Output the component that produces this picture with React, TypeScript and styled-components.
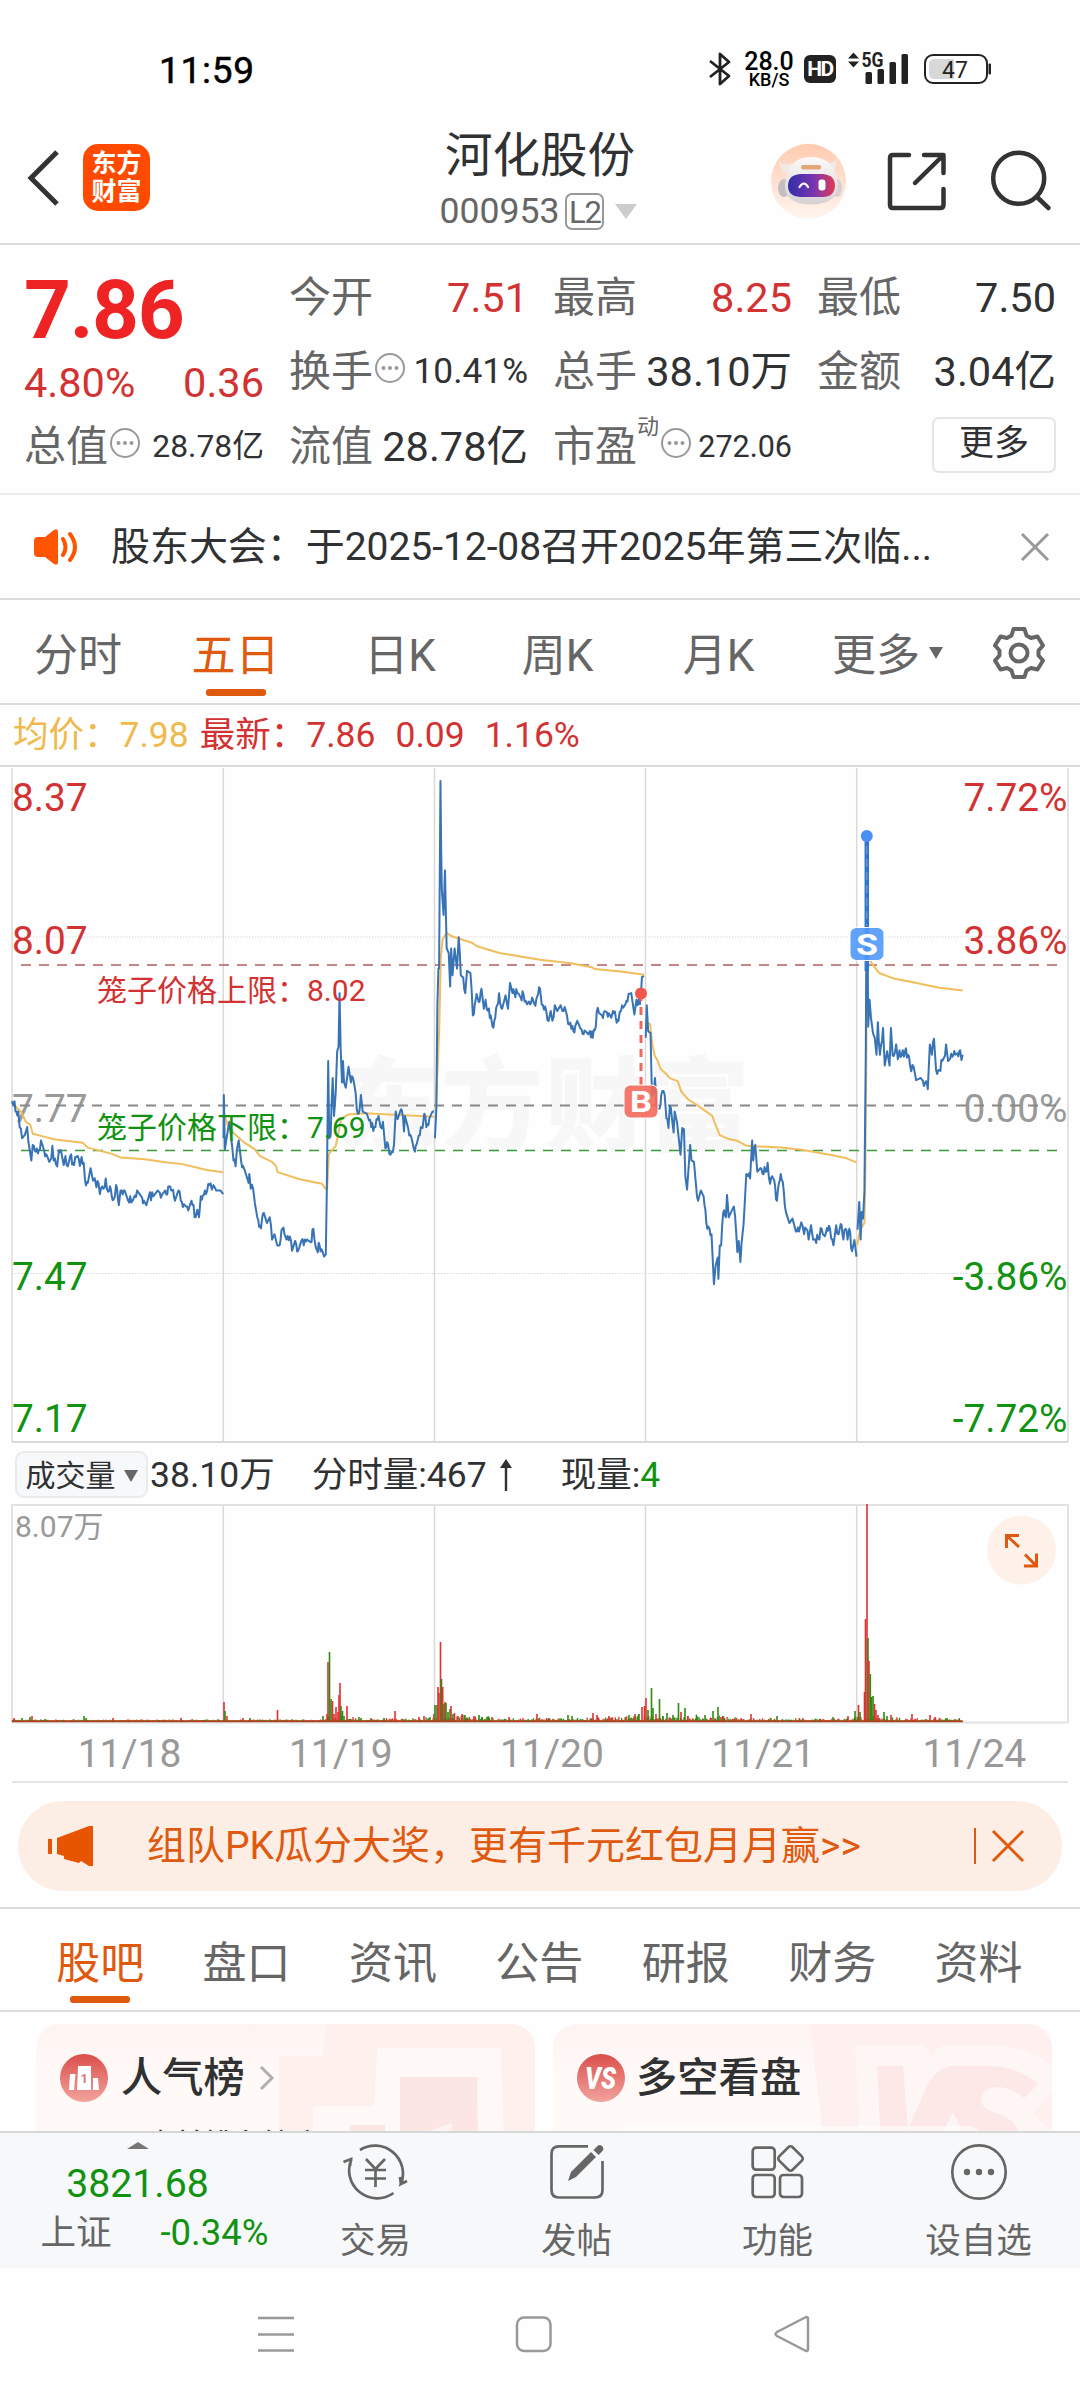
import React from "react";
import styled, { createGlobalStyle } from "styled-components";

const RED = "#d23232";
const GREEN = "#119211";
const ORANGE = "#df590f";
const INK = "#303133";
const GREY = "#666";

const Global = createGlobalStyle`
  * { box-sizing: border-box; }
  body { margin: 0; background: #fefefe; }
  body, text { font-family: Roboto, "Noto Sans CJK SC", sans-serif; }
`;

const Screen = styled.div`
  width: 1080px;
  height: 2400px;
  overflow: hidden;
  display: flex;
  flex-direction: column;
  background: #fefefe;
  color: ${INK};
  line-height: 1;
  white-space: nowrap;
`;

/* ---------- status bar ---------- */
const StatusBar = styled.div`
  height: 120px;
  flex: none;
  display: flex;
  align-items: center;
  padding: 17px 88px 0 159px;
  color: #000;
`;
const Clock = styled.div`
  font-size: 37px;
  font-weight: 400;
  letter-spacing: 0.7px;
  margin: 3px auto 0 0;
  -webkit-text-stroke: 0.5px #000;
`;
const Speed = styled.div`
  width: 54px;
  margin: 1px 8px 0 10px;
  text-align: center;
  font-size: 25px;
  font-weight: 500;
  line-height: 21px;
  small { display: block; font-size: 18px; line-height: 15px; }
`;
const HdBadge = styled.div`
  width: 32px;
  height: 28px;
  border-radius: 6px;
  background: #222;
  color: #fff;
  font-size: 21px;
  font-weight: 700;
  line-height: 29px;
  text-align: center;
  letter-spacing: -1.5px;
`;

/* ---------- title bar ---------- */
const TitleBar = styled.header`
  height: 125px;
  flex: none;
  display: grid;
  grid-template-columns: 330px 1fr 330px;
  border-bottom: 2px solid #dcdcdc;
`;
const TitleSide = styled.div`
  display: flex;
  align-items: center;
  padding: 0 0 8px 24px;
`;
const Logo = styled.div`
  width: 67px;
  height: 67px;
  margin-left: 21px;
  border-radius: 15px;
  background: #ff4a00;
  color: #fff;
  display: grid;
  place-content: center;
  text-align: center;
  font-size: 25px;
  font-weight: 700;
  line-height: 28px;
`;
const TitleText = styled.div`
  display: flex;
  flex-direction: column;
  align-items: center;
  h1 { margin: 11px 0 0; font-size: 47.5px; font-weight: 400; line-height: 50px; }
`;
const CodeRow = styled.div`
  display: flex;
  align-items: center;
  gap: 6px;
  margin: 12px 3px 0 0;
  color: ${GREY};
  font-size: 35.6px;
  i { margin-left: 5px; }
`;
const LevelTag = styled.span`
  width: 39px;
  height: 37px;
  border: 2px solid #999;
  border-radius: 7px;
  font-size: 31px;
  line-height: 35px;
  letter-spacing: -1px;
  text-align: center;
`;
const Triangle = styled.i<{ w: number; h: number; color: string; up?: boolean }>`
  border: ${(p) => p.w / 2}px solid transparent;
  border-top: ${(p) => (p.up ? "0" : `${p.h}px solid ${p.color}`)};
  border-bottom: ${(p) => (p.up ? `${p.h}px solid ${p.color}` : "0")};
`;

/* ---------- quote ---------- */
const Quote = styled.section`
  height: 250px;
  flex: none;
  display: grid;
  grid-template-columns: 240px 239px 239px 239px;
  grid-template-rows: 74px 74px 76px;
  column-gap: 25px;
  padding: 16px 0 0 24px;
  border-bottom: 2px solid #ececec;
`;
const PriceBlock = styled.div`
  grid-row: 1 / 3;
  color: ${RED};
  strong { display: block; margin-top: 8px; font-size: 82px; font-weight: 700; color: #ee2323; letter-spacing: -1.4px; }
  div { display: flex; justify-content: space-between; margin-top: 11px; font-size: 41.5px; }
`;
const Cell = styled.div`
  display: flex;
  align-items: center;
`;
const Label = styled.span`
  color: ${GREY};
  font-size: 42px;
`;
const Value = styled.span<{ size?: number; color?: string }>`
  margin-left: auto;
  font-size: ${(p) => p.size ?? 41.5}px;
  color: ${(p) => p.color ?? INK};
`;
const Sup = styled.sup`
  align-self: flex-start;
  margin-top: 7px;
  font-size: 22px;
  line-height: 1;
  color: ${GREY};
`;
const MoreButton = styled.button`
  margin: -4px 0 0 auto;
  width: 124px;
  height: 56px;
  border: 2px solid #e3e5e7;
  border-radius: 7px;
  background: none;
  padding: 0 0 3px;
  font: 35px/1 Roboto, "Noto Sans CJK SC", sans-serif;
  color: ${INK};
`;

/* ---------- notice ---------- */
const Notice = styled.section`
  height: 105px;
  flex: none;
  display: flex;
  align-items: center;
  padding: 0 30px 0 33px;
  border-bottom: 2px solid #dcdcdc;
  p { margin: 1px auto 0 32px; font-size: 39px; letter-spacing: -0.05px; }
`;

/* ---------- tabs ---------- */
const PeriodTabs = styled.nav`
  height: 105px;
  flex: none;
  display: grid;
  grid-template-columns: 156px 159px 170px 145px 177px 161px 101px;
  border-bottom: 2px solid #dcdcdc;
`;
const SectionTabs = styled.nav`
  height: 105px;
  flex: none;
  display: grid;
  grid-template-columns: repeat(7, 146.4px);
  padding-left: 27px;
  border-top: 2px solid #dcdcdc;
  border-bottom: 2px solid #dcdcdc;
`;
const Tab = styled.div<{ active?: boolean }>`
  display: grid;
  grid-auto-flow: column;
  place-content: center;
  align-items: center;
  gap: 9px;
  padding-top: 8px;
  position: relative;
  font-size: 44px;
  color: ${(p) => (p.active ? ORANGE : GREY)};
  svg, i { margin-top: -6px; }
  &::after {
    content: "";
    display: ${(p) => (p.active ? "block" : "none")};
    position: absolute;
    left: calc(50% - 30px);
    bottom: 7px;
    width: 60px;
    height: 7px;
    border-radius: 3px;
    background: ${ORANGE};
  }
`;

/* ---------- chart ---------- */
const AverageRow = styled.div`
  height: 62px;
  flex: none;
  display: flex;
  align-items: center;
  padding: 2px 0 0 13px;
  border-bottom: 2px solid #dcdcdc;
  font-size: 35.5px;
  color: ${RED};
  span { margin-right: 20px; }
  span:first-child { color: #f0b94b; margin-right: 11px; }
`;
const PriceChart = styled.svg`
  flex: none;
  display: block;
`;
const VolumeRow = styled.div`
  height: 61px;
  flex: none;
  display: flex;
  align-items: center;
  padding: 2px 0 0 15px;
  font-size: 35.5px;
  b { font-weight: 400; color: ${GREEN}; }
`;
const IndicatorPill = styled.div`
  width: 133px;
  height: 47px;
  margin-right: 2px;
  padding-top: 2px;
  display: flex;
  align-items: center;
  justify-content: center;
  gap: 8px;
  border: 2px solid #e9eaec;
  border-radius: 9px;
  background: #f7f8fa;
  font-size: 30px;
`;
const VolumeFigure = styled.span<{ gap: number }>`
  margin: 2px ${(p) => p.gap}px 0 0;
`;
const Dates = styled.div`
  height: 59px;
  flex: none;
  display: grid;
  grid-template-columns: repeat(5, 211.2px);
  margin: 0 12px;
  padding-left: 12px;
  border-bottom: 2px solid #e4e4e4;
  text-align: center;
  font-size: 39px;
  line-height: 61px;
  color: #999;
`;

/* ---------- promo banner ---------- */
const Banner = styled.section`
  height: 90px;
  flex: none;
  margin: 18px 18px 16px;
  border-radius: 45px;
  background: #fceee5;
  display: flex;
  align-items: center;
  padding: 0 37px 0 29px;
  color: ${ORANGE};
  p { margin: 0 auto 0 52px; font-size: 39px; }
`;
const Divider = styled.i`
  width: 2px;
  height: 36px;
  margin-right: 15px;
  background: ${ORANGE};
`;

/* ---------- cards ---------- */
const Cards = styled.section`
  flex: 1;
  overflow: hidden;
  display: grid;
  grid-template-columns: 499px 499px;
  gap: 18px;
  padding: 12px 0 0 36px;
`;
const Card = styled.article`
  position: relative;
  height: 180px;
  padding: 30px 24px 0;
  border-radius: 24px;
  overflow: hidden;
  background: linear-gradient(#fef4f2, #fffaf8 60px);
`;
const CardArt = styled.svg`
  position: absolute;
  left: 0;
  top: 0;
`;
const CardHead = styled.div`
  position: relative;
  display: flex;
  align-items: center;
  font-size: 41.3px;
  font-weight: 500;
`;
const CardTitle = styled.span<{ inset: number }>`
  margin: 1px 14px 0 ${(p) => p.inset}px;
`;
const CardNote = styled.div`
  position: relative;
  margin: 28.500px 0 0 86px;
  font-size: 29px;
  color: ${INK};
`;

/* ---------- bottom bar ---------- */
const BottomBar = styled.footer`
  height: 137px;
  flex: none;
  display: grid;
  grid-template-columns: 275px repeat(4, 201px);
  background: #f6f8fa;
  border-top: 2px solid #d5d7d9;
`;
const IndexBox = styled.div`
  display: flex;
  flex-direction: column;
  align-items: center;
  padding-top: 9px;
  color: ${GREEN};
  font-size: 39.2px;
`;
const IndexValue = styled.div`
  margin-top: 16px;
`;
const IndexChange = styled.div`
  display: flex;
  align-items: center;
  gap: 49px;
  margin: 11px 0 0 34px;
  font-size: 36.5px;
  span { font-size: 35.5px; color: ${GREY}; }
`;
const Action = styled.div`
  display: flex;
  flex-direction: column;
  align-items: center;
  padding-top: 9px;
  font-size: 35.5px;
  color: ${GREY};
  svg { margin-bottom: 22px; }
`;
const SystemNav = styled.div`
  height: 132px;
  flex: none;
  display: flex;
  align-items: flex-start;
  gap: 218px;
  padding: 46px 0 0 256px;
`;

/* ---------- icons ---------- */
const InfoSvg = styled.svg`
  margin: -8px 0 0 1px;
`;
const InfoDots = () => (
  <InfoSvg width="32" height="32" viewBox="0 0 32 32" fill="none">
    <circle cx="16" cy="16" r="14" stroke="#999" strokeWidth="2" />
    {[9.5, 16, 22.5].map((x) => <circle key={x} cx={x} cy="16" r="2" fill="#999" />)}
  </InfoSvg>
);

const Cross = ({ size, color, width }: { size: number; color: string; width: number }) => (
  <svg width={size} height={size} viewBox={`0 0 ${size} ${size}`}>
    <path d={`M2 2L${size - 2} ${size - 2}M${size - 2} 2L2 ${size - 2}`} stroke={color} strokeWidth={width} fill="none" />
  </svg>
);

const StatusIcons = () => (
  <svg width="146" height="36" viewBox="846 51 146 36" fill="#222">
    <path d="M853.500 52.500L859 58.500H848ZM853.500 67.500L859 61.500H848Z" />
    <text x="861.500" y="67" fontSize="20" fontWeight="700" textLength="22" lengthAdjust="spacingAndGlyphs">5G</text>
    <rect x="865.500" y="72" width="6.500" height="12" rx="1.500" />
    <rect x="877.500" y="69" width="6.500" height="15" rx="1.500" />
    <rect x="889.500" y="62" width="6.500" height="22" rx="1.500" />
    <rect x="901.500" y="54" width="6.500" height="30" rx="1.500" />
    <rect x="925" y="55" width="62" height="28" rx="8" fill="#fff" stroke="#222" strokeWidth="2" />
    <path d="M935 59H954V79H935Q929 79 929 74V64Q929 59 935 59Z" fill="#d8d8d8" />
    <rect x="988.500" y="63.500" width="2.500" height="11" rx="1" />
    <text x="942" y="77.500" fontSize="23">47</text>
  </svg>
);

const HeaderSvg = styled.svg`
  margin: 8px 0 0 -14px;
`;
const HeaderActions = () => (
  <HeaderSvg width="300" height="90" viewBox="760 133 300 90" fill="none" stroke="#333" strokeWidth="4.500" strokeLinecap="round" strokeLinejoin="round">
    <defs>
      <linearGradient id="halo" x1="0" y1="0" x2="0" y2="1"><stop offset="0" stopColor="#ffcbb0" /><stop offset="1" stopColor="#fff5ef" /></linearGradient>
      <linearGradient id="visor"><stop offset="0" stopColor="#332fa8" /><stop offset=".55" stopColor="#7a35b0" /><stop offset="1" stopColor="#e23a55" /></linearGradient>
      <linearGradient id="helmet" x1="0" y1="0" x2="0" y2="1"><stop offset="0" stopColor="#fcfaf9" /><stop offset="1" stopColor="#d5d1d3" /></linearGradient>
    </defs>
    <g stroke="none">
      <circle cx="808.500" cy="177.300" r="37.500" fill="url(#halo)" />
      <path d="M779 157Q779 168 788 170L793 159Q784 163 779 157ZM836 155Q838 167 829 170L824 158Q833 161 836 155Z" fill="#f2e9e7" />
      <ellipse cx="784" cy="184" rx="6" ry="9" fill="#c5bdc2" />
      <ellipse cx="837" cy="184" rx="5" ry="9" fill="#d9cfd2" />
      <path d="M785 182Q787 153 811 153Q835 153 838 181Q838 200 811 200.500Q785 200 785 182Z" fill="url(#helmet)" />
      <rect x="801" y="161" width="20" height="4.500" rx="2" fill="#e2a677" />
      <path d="M800 170H823Q835 171 835 182Q834 193 823 193H800Q788 192 788 182Q788 171 800 170Z" fill="url(#visor)" />
      <rect x="818.500" y="175.500" width="7" height="11" rx="3" fill="#fff" />
    </g>
    <path d="M799.500 183Q804 176 808 183" stroke="#fff" strokeWidth="2.200" />
    <path d="M909 151H893Q890 151 890 154V201Q890 204 893 204H940Q943.500 204 943.500 201V185M924 151H943.500V169M942.500 152L915 179" />
    <circle cx="1018.700" cy="174.300" r="25.500" />
    <path d="M1037 193L1048.500 204" />
  </HeaderSvg>
);

const Gear = () => (
  <svg width="54" height="54" viewBox="-27 -27 54 54" fill="none" stroke="#666" strokeWidth="4" strokeLinejoin="round">
    <path d="M-5.500 -24H5.500L7.500 -17.500L12 -15L18.500 -16.500L24 -7.500L19.500 -2.500V2.500L24 7.500L18.500 16.500L12 15L7.500 17.500L5.500 24H-5.500L-7.500 17.500L-12 15L-18.500 16.500L-24 7.500L-19.500 2.500V-2.500L-24 -7.500L-18.500 -16.500L-12 -15L-7.500 -17.500Z" />
    <circle r="8.500" />
  </svg>
);

/* ---------- chart data ---------- */
/* Session price tracks in plot units: x advances about 2.6 per minute, y grows downwards. */
const PRICE = [
  "35,762 39,772 42,762 45,785 53,785 57,820 64,845 72,838 79,820 86,870 91,895 95,860 113,872 119,850 128,872 137,885 143,898 149,890 152,862 156,895 166,908 171,872 180,885 185,905 190,885 197,908 204,885 215,905 222,887 232,907 237,887 243,900 247,940 255,945 263,912 270,940 275,935 280,955 286,945 290,970 300,958 307,935 314,965 322,960 330,982 337,950 345,995 350,962 362,962 372,985 378,975 385,985 398,962 410,975 418,985 425,995 432,975 445,975 458,962 470,972 480,962 500,962 508,985 518,962 525,985 540,998 550,998 556,985 568,1022 573,1005 578,1022 583,975 598,970 608,950 615,960 620,950 628,962 640,962 648,970",
  "649,845 650,748 653,870 660,835 666,808 675,870 678,895 684,908 688,870 693,850 700,895 712,920 722,945 724,925 728,958 735,958 740,990 747,1022 758,1047 766,1012 775,1035 783,1022 790,1072 797,1060 805,1085 812,1085 820,1048 832,1072 845,1075 848,1097 857,1075 866,1097 875,1075 882,1085 892,1072 902,1078 910,1048 920,1095 928,1085 936,1098 941,1110 946,1105 949,960 953,672 956,845 960,840 966,710 970,795 975,740 979,650 983,640 986,520 989,640 993,720 996,672 999,720 1004,732 1012,685 1019,720 1025,710 1030,730 1036,780 1044,782 1048,748 1053,785 1065,790 1078,820 1090,820 1099,795 1105,820 1112,808 1119,868 1127,860 1134,882 1144,860 1149,785 1157,797 1162,785 1170,797 1173,830 1176,795 1185,822 1195,845 1202,870 1210,858 1222,820 1227,822 1232,790 1238,820 1247,800 1256,785 1260,785",
  "1263,845 1267,780 1270,550 1273,465 1275,465 1279,45 1281,200 1283,290 1288,345 1292,245 1297,420 1303,430 1307,505 1310,420 1314,480 1320,420 1327,465 1332,395 1338,480 1345,485 1351,520 1356,470 1366,475 1373,570 1384,522 1390,540 1398,510 1405,555 1410,535 1417,560 1425,570 1430,595 1438,575 1449,520 1458,555 1468,525 1475,555 1481,497 1488,520 1505,520 1512,530 1520,522 1530,545 1545,530 1552,545 1568,510 1573,545 1583,550 1593,582 1599,560 1604,582 1611,547 1618,560 1628,547 1633,560 1643,560 1653,590 1659,600 1665,605 1676,582 1686,600 1700,605 1708,612 1713,605 1721,620 1730,595 1733,560 1748,570 1756,560 1768,565 1775,575 1780,560 1788,575 1796,582 1803,560 1816,545 1825,522 1833,520 1842,568 1848,535 1858,545 1862,510 1864,484 1870,482",
  "1875,620 1878,547 1882,605 1889,610 1893,750 1898,740 1902,710 1906,770 1918,770 1920,748 1930,748 1935,800 1941,822 1945,772 1951,800 1956,832 1959,785 1966,810 1976,882 1981,822 1986,825 1990,930 1995,960 2004,860 2008,895 2015,898 2021,950 2027,985 2035,962 2043,975 2051,1035 2060,1047 2066,1060 2073,1172 2078,1130 2084,1112 2086,1160 2090,1085 2094,1085 2100,1012 2108,1022 2111,972 2116,1022 2123,1010 2131,998 2138,1060 2141,1100 2145,1075 2150,1122 2156,1060 2162,998 2167,925 2178,935 2184,850 2187,895 2193,860 2199,920 2208,912 2223,920 2229,900 2236,947 2245,935 2256,985 2267,925 2276,965 2282,1010 2292,1035 2301,1025 2308,1045 2323,1045 2330,1040 2335,1060 2341,1048 2348,1072 2355,1040 2361,1072 2376,1070 2386,1048 2398,1058 2410,1047 2420,1085 2428,1040 2435,1060 2441,1037 2449,1072 2455,1048 2461,1072 2466,1048 2474,1098 2481,1073 2487,1110",
  "2490,1050 2495,988 2499,1072 2502,1010 2506,1025 2510,965 2514,650 2517,170 2521,595 2525,535 2529,575 2535,610 2540,620 2545,658 2549,585 2555,658 2564,598 2569,682 2576,650 2583,682 2587,598 2592,660 2602,635 2607,668 2612,648 2618,660 2628,650 2636,658 2646,695 2653,685 2660,715 2673,710 2686,722 2694,735 2700,635 2706,658 2712,622 2718,692 2728,692 2736,672 2744,660 2747,635 2753,672 2768,660 2780,655 2788,648 2792,670 2795,658",
];
const AVERAGE = [
  "35,762 50,778 62,787 75,808 88,815 95,835 130,842 160,848 240,855 255,866 325,880 350,888 420,892 480,899 530,903 600,916 648,921",
  "651,790 664,822 680,835 710,855 740,870 755,885 790,898 802,908 806,921 870,937 935,947 945,958 950,958 955,880 975,862 985,825 990,803 1010,792 1060,789 1260,797",
  "1265,790 1275,610 1280,440 1285,400 1297,385 1310,392 1370,407 1385,415 1450,430 1568,445 1658,453 1718,462 1728,466 1808,472 1871,479",
  "1878,585 1888,590 1893,630 1901,660 1910,672 1918,690 1933,700 1946,711 1968,717 1978,740 1998,758 2023,770 2068,795 2076,812 2090,838 2113,846 2138,850 2168,862 2268,866 2328,871 2418,883 2458,890 2487,899",
  "2489,1085 2498,1050 2510,1035 2513,900 2517,500 2522,440 2533,455 2553,475 2598,488 2648,495 2678,500 2728,508 2795,514",
];

/* Deterministic generator for minute-to-minute ticks. */
const makeNoise = (seed: number) => () => {
  seed = (seed * 1103515245 + 12345) % 2147483648;
  return seed / 2147483648;
};

const withTicks = (track: string, seed: number) => {
  const rand = makeNoise(seed);
  const pts = track.split(" ").map((p) => p.split(",").map(Number));
  const out: string[] = [];
  pts.forEach(([x, y], i) => {
    out.push(`${x},${y}`);
    const next = pts[i + 1];
    if (!next) return;
    const steps = Math.floor((next[0] - x) / 2.64);
    for (let s = 1; s < steps; s++) {
      const t = s / steps;
      const jitter = rand() < 0.45 ? (rand() < 0.5 ? -9 : 9) : 0;
      out.push(`${(x + (next[0] - x) * t).toFixed(1)},${(y + (next[1] - y) * t + jitter).toFixed(1)}`);
    }
  });
  return out.join(" ");
};

const DAY_LINES = [223.3, 434.5, 645.5, 856.7];

const axis = [
  { y: 49.5, price: "8.37", pct: "7.72%", color: RED },
  { y: 192.5, price: "8.07", pct: "3.86%", color: RED },
  { y: 360.5, price: "7.77", pct: "0.00%", color: "#999" },
  { y: 528.5, price: "7.47", pct: "-3.86%", color: GREEN },
  { y: 670.5, price: "7.17", pct: "-7.72%", color: GREEN },
];

const Marker = ({ x, y, letter, color }: { x: number; y: number; letter: string; color: string }) => (
  <g>
    <rect x={x - 17} y={y - 16.5} width="34" height="33" rx="6.500" fill={color} stroke="#fff" strokeWidth="1" fillOpacity=".9" />
    <text x={x - 11} y={y + 10.5} fontSize="30" fontWeight="700" fill="#fff" textLength="22" lengthAdjust="spacingAndGlyphs">{letter}</text>
  </g>
);

const Prices = () => (
  <PriceChart width="1080" height="676" viewBox="0 6 1080 676">
    <text x="338" y="382" fontSize="102" fontWeight="900" fill="#f7f7f7" textLength="412">东方财富</text>
    <g stroke="#d9d9d9" strokeWidth="1.500">
      {DAY_LINES.map((x) => <path key={x} d={`M${x} 7V681`} />)}
      <path d="M12 7V681M1068 7V681" stroke="#e3e3e3" strokeWidth="2" />
      <path d="M12 681H1068" strokeWidth="2" />
      <path d="M12 176H1068M12 512.500H1068" strokeDasharray="1.500 1.500" strokeWidth="1" />
    </g>
    {axis.map((a) => (
      <g key={a.price} fill={a.color} fontSize="38.800">
        <text x="12" y={a.y}>{a.price}</text>
        <text x="1067.500" y={a.y} textAnchor="end">{a.pct}</text>
      </g>
    ))}
    <g strokeDasharray="10 8" strokeWidth="1.500" fill="none">
      <path d="M21 204H1060" stroke="#b5605f" />
      <path d="M20 344.500H1060" stroke="#888" strokeWidth="1.800" />
      <path d="M21 389.500H1060" stroke="#3a9a3a" />
    </g>
    <g fill="none" transform="scale(.34439 .44643)" strokeLinejoin="round">
      {AVERAGE.map((p) => <polyline key={p} points={p} stroke="#f0be5c" strokeWidth="2" vectorEffect="non-scaling-stroke" />)}
      {PRICE.map((p, i) => <polyline key={p} points={withTicks(p, 11 + i * 37)} stroke="#3873b5" strokeWidth="2" vectorEffect="non-scaling-stroke" />)}
    </g>
    <text x="97" y="239.500" fontSize="30" fill={RED}>笼子价格上限：8.02</text>
    <text x="97" y="376.500" fontSize="30" fill={GREEN}>笼子价格下限：7.69</text>
    <path d="M641 232V326" stroke="#f0685c" strokeWidth="3" strokeDasharray="8 6" />
    <circle cx="641" cy="232.500" r="6" fill="#f0564a" />
    <Marker x={641} y={340.500} letter="B" color="#f3695c" />
    <path d="M866.800 75V210" stroke="#2f76cf" strokeWidth="4.500" />
    <path d="M866.800 85V165" stroke="#7c9cc0" strokeWidth="1.200" strokeDasharray="8 5" />
    <circle cx="866.800" cy="75" r="6" fill="#4a90f3" />
    <Marker x={867} y={183} letter="S" color="#5199fa" />
  </PriceChart>
);

/* [x, bar height, r = up / g = down] */
const SPIKES: [number, number, "r" | "g"][] = [
  [14, 4, "r"], [22, 4, "g"], [30, 5, "g"], [32, 6, "r"], [45, 3, "g"], [84, 6, "g"], [86, 4, "g"], [113, 4, "r"], [181, 4, "r"],
  [224, 20, "r"], [225, 11, "g"], [227, 6, "r"], [243, 4, "r"], [250, 4, "g"], [277.500, 12, "r"], [323, 6, "g"],
  [327, 8, "r"], [328, 60, "r"], [329.500, 70, "g"], [331, 23, "g"], [332.500, 21, "r"], [334, 8, "r"], [336, 15, "r"], [338, 10, "r"],
  [339, 27, "r"], [340, 39, "r"], [341, 16, "g"], [342.500, 11, "g"], [344, 6, "g"], [347, 16, "r"],
  [359, 5, "g"], [361, 4, "g"], [371, 4, "r"], [384, 4, "g"], [395, 11, "r"], [419, 5, "r"], [424, 6, "r"], [430, 5, "g"],
  [434, 8, "r"], [435, 17, "g"], [437, 17, "g"], [438, 35, "r"], [439, 29, "r"], [440.500, 80, "r"], [441.500, 43, "g"], [442.700, 35, "r"],
  [444, 18, "g"], [445, 20, "r"], [446, 19, "g"], [448, 10, "g"], [450, 13, "g"], [451, 16, "r"], [453, 8, "g"], [454.500, 9, "r"], [458, 6, "r"], [462, 8, "r"], [465, 7, "g"],
  [474, 6, "r"], [479, 7, "g"], [482, 5, "g"], [492, 5, "r"], [509, 5, "r"], [537, 8, "r"], [568, 7, "g"], [572, 6, "g"], [593, 9, "r"], [597, 7, "r"], [609, 6, "r"],
  [629, 7, "g"], [635, 8, "r"], [639, 8, "g"], [642, 15, "r"], [644.500, 16, "r"], [646, 24, "r"], [648, 12, "g"], [651.500, 34, "g"], [653, 14, "g"], [656, 8, "r"], [659.500, 23, "g"],
  [663, 6, "g"], [667, 9, "g"], [673, 7, "g"], [678.500, 19, "g"], [681, 10, "r"], [685, 14, "g"], [688, 6, "r"], [697, 6, "g"], [705, 7, "g"], [713, 11, "g"], [718, 15, "g"], [721, 5, "r"],
  [751, 8, "r"], [777, 6, "g"], [833, 5, "g"], [848, 6, "r"], [855, 11, "g"], [858.500, 17, "r"], [860, 10, "g"],
  [864.500, 30, "r"], [865.500, 103, "r"], [867, 218, "r"], [868, 84, "g"], [869, 61, "r"], [870.300, 48, "g"], [871.500, 25, "g"], [873, 26, "g"], [874.500, 18, "r"], [876, 12, "r"], [878, 7, "r"],
  [884, 10, "g"], [887, 6, "g"], [891, 7, "r"], [912, 8, "r"], [930, 7, "r"], [935, 5, "r"], [947, 4, "g"],
];

const Volumes = () => {
  const rand = makeNoise(77);
  const busy = (x: number) => (x > 325 && x < 360) || (x > 430 && x < 500) || (x > 600 && x < 735) || (x > 845 && x < 900) ? 3.5 : x > 370 ? 1.8 : 0.8;
  const ticks = Array.from({ length: 1080 }, (_, i) => {
    const x = 12.5 + i * 0.88;
    return { x, h: 1 + rand() * rand() * busy(x) * 1.8, up: rand() < 0.5 };
  });
  const color = (up: boolean) => (up ? "#e03131" : "#2f8a12");
  return (
    <PriceChart width="1080" height="220" viewBox="0 1504 1080 220">
      <path d="M12 1505H1068M12 1722.500H1068M12 1504V1723M1068 1504V1723" stroke="#e2e2e2" strokeWidth="2" />
      {DAY_LINES.map((x) => <path key={x} d={`M${x} 1505V1722`} stroke="#d9d9d9" strokeWidth="1.500" />)}
      <text x="15" y="1536.500" fontSize="30" fill="#999">8.07万</text>
      {ticks.filter((t) => t.x < 962).map((t) => <rect key={t.x} x={t.x - 0.6} y={1721.5 - t.h} width="1.300" height={t.h} fill={color(t.up)} />)}
      {SPIKES.map(([x, h, c], i) => <rect key={i} x={x - 0.8} y={1722 - h} width="1.600" height={h} fill={color(c === "r")} />)}
      <path d="M12 1721.300H963" stroke="#ae4420" strokeWidth="1.800" />
      <circle cx="1021.500" cy="1550" r="34.500" fill="#fef1ea" />
      <path d="M1019 1535.500H1006.500V1548M1007 1536L1019 1547M1024 1566H1036.500V1553.500M1036 1565.500L1025 1554.500" fill="none" stroke={ORANGE} strokeWidth="3" />
    </PriceChart>
  );
};

export default function App() {
  return (
    <Screen>
      <Global />
      <StatusBar>
        <Clock>11:59</Clock>
        <svg width="24" height="36" viewBox="0 0 24 36" fill="none" stroke="#222" strokeWidth="2.800" strokeLinejoin="round">
          <path d="M2 10L21 25L12 33V3L21 11L2 26" />
        </svg>
        <Speed>28.0<small>KB/S</small></Speed>
        <HdBadge>HD</HdBadge>
        <svg width="10" height="1" />
        <StatusIcons />
      </StatusBar>

      <TitleBar>
        <TitleSide>
          <svg width="38" height="60" viewBox="0 0 38 60" fill="none" stroke="#333" strokeWidth="5">
            <path d="M33 4L7 30L33 56" />
          </svg>
          <Logo>东方<br />财富</Logo>
        </TitleSide>
        <TitleText>
          <h1>河化股份</h1>
          <CodeRow>000953<LevelTag>L2</LevelTag><Triangle w={22} h={15} color="#ccc" /></CodeRow>
        </TitleText>
        <TitleSide><HeaderActions /></TitleSide>
      </TitleBar>

      <Quote>
        <PriceBlock>
          <strong>7.86</strong>
          <div><span>4.80%</span><span>0.36</span></div>
        </PriceBlock>
        <Cell><Label>今开</Label><Value color={RED}>7.51</Value></Cell>
        <Cell><Label>最高</Label><Value color={RED}>8.25</Value></Cell>
        <Cell><Label>最低</Label><Value>7.50</Value></Cell>
        <Cell><Label>换手</Label><InfoDots /><Value size={35.3}>10.41%</Value></Cell>
        <Cell><Label>总手</Label><Value>38.10万</Value></Cell>
        <Cell><Label>金额</Label><Value>3.04亿</Value></Cell>
        <Cell><Label>总值</Label><InfoDots /><Value size={31.8}>28.78亿</Value></Cell>
        <Cell><Label>流值</Label><Value>28.78亿</Value></Cell>
        <Cell><Label>市盈</Label><Sup>动</Sup><InfoDots /><Value size={30.5}>272.06</Value></Cell>
        <Cell><MoreButton>更多</MoreButton></Cell>
      </Quote>

      <Notice>
        <svg width="46" height="38" viewBox="0 0 46 38" fill="#ff5500">
          <path d="M5 9H12L21 2Q25 0 25 4V34Q25 38 21 36L12 29H5Q1 29 1 25V13Q1 9 5 9Z" />
          <path d="M30 11Q35 19 30 27M37 6Q47 19 37 32" fill="none" stroke="#ff5500" strokeWidth="4" strokeLinecap="round" />
        </svg>
        <p>股东大会：于2025-12-08召开2025年第三次临...</p>
        <Cross size={30} color="#999" width={3} />
      </Notice>

      <PeriodTabs>
        <Tab>分时</Tab>
        <Tab active>五日</Tab>
        <Tab>日K</Tab>
        <Tab>周K</Tab>
        <Tab>月K</Tab>
        <Tab>更多<Triangle w={15} h={12} color={GREY} /></Tab>
        <Tab><Gear /></Tab>
      </PeriodTabs>

      <AverageRow>
        <span>均价：7.98</span><span>最新：7.86</span><span>0.09</span><span>1.16%</span>
      </AverageRow>
      <Prices />
      <VolumeRow>
        <IndicatorPill>成交量<Triangle w={15} h={12} color={GREY} /></IndicatorPill>
        <VolumeFigure gap={37}>38.10万</VolumeFigure>
        <VolumeFigure gap={13}>分时量:467</VolumeFigure>
        <svg width="12" height="32" viewBox="0 0 12 32" fill="#303133">
          <path d="M6 0L12 9H7.200V32H4.800V9H0Z" />
        </svg>
        <VolumeFigure gap={49} />
        <VolumeFigure gap={0}>现量:<b>4</b></VolumeFigure>
      </VolumeRow>
      <Volumes />
      <Dates>
        {["11/18", "11/19", "11/20", "11/21", "11/24"].map((d) => <span key={d}>{d}</span>)}
      </Dates>

      <Banner>
        <svg width="48" height="42" viewBox="0 0 48 42" fill="#e85500">
          <path d="M1 14H5V29H1ZM10 13L42 1H46V41H42L34 36L32 38L17 34V31L10 29Z" />
        </svg>
        <p>组队PK瓜分大奖，更有千元红包月月赢&gt;&gt;</p>
        <Divider />
        <Cross size={34} color={ORANGE} width={3} />
      </Banner>

      <SectionTabs>
        {["股吧", "盘口", "资讯", "公告", "研报", "财务", "资料"].map((t, i) => <Tab key={t} active={i === 0}>{t}</Tab>)}
      </SectionTabs>

      <Cards>
        <Card>
          <CardArt width="499" height="180" viewBox="0 0 499 180">
            <path d="M290 0H499V180H243V32H287Z" fill="#fdf0ed" />
            <path d="M277 180V82H338L341 24H465L470 180Z" fill="#fef8f6" />
            <path d="M364 53H441L443 180H364ZM314 101H349V180H314Z" fill="#fbe6e4" />
            <path d="M385 110L416 99V120H385Z" fill="#fef4f2" />
          </CardArt>
          <CardHead>
            <svg width="48" height="48" viewBox="0 0 48 48">
              <defs><linearGradient id="badge" x1="0" y1="0" x2="0" y2="1"><stop offset="0" stopColor="#da4f4b" /><stop offset="1" stopColor="#f2a29d" /></linearGradient></defs>
              <circle cx="24" cy="24" r="24" fill="url(#badge)" />
              <path d="M10 20H15.500L14 36H9ZM18 12H31V36H17ZM33 24H38L39 36H33Z" fill="#fff" />
              <text x="20.500" y="28.500" fontSize="13" fontWeight="700" fill="#e2716d">1</text>
            </svg>
            <CardTitle inset={13}>人气榜</CardTitle>
            <svg width="16" height="26" viewBox="0 0 16 26" fill="none" stroke="#b3aeac" strokeWidth="3">
              <path d="M2 2L13 13L2 24" />
            </svg>
          </CardHead>
          <CardNote>当前排名较昨日</CardNote>
        </Card>
        <Card>
          <CardArt width="499" height="180" viewBox="0 0 499 180">
            <path d="M257 0H499V180H278Z" fill="#fdf0ee" />
            <path d="M302 21H370L378 31L390 21H430Q475 21 499 42V68L480 90L499 107V180H310Z" fill="#fef6f4" />
            <path d="M324 42H350L355 105L375 60Q385 42 402 42H435Q465 42 485 60L471 74Q450 57 433 66Q420 80 440 88Q465 96 467 112V180H410V108L400 88L384 120V180H331Z" fill="#fbe8e7" />
            <rect x="57" y="102" width="377" height="70" rx="20" fill="#fff" fillOpacity=".6" />
          </CardArt>
          <CardHead>
            <svg width="48" height="48" viewBox="0 0 48 48">
              <circle cx="24" cy="24" r="24" fill="url(#badge)" />
              <text x="8" y="35" fontSize="31" fontWeight="900" fontStyle="italic" fill="#fff" textLength="31" lengthAdjust="spacingAndGlyphs">VS</text>
            </svg>
            <CardTitle inset={11}>多空看盘</CardTitle>
          </CardHead>
        </Card>
      </Cards>

      <BottomBar>
        <IndexBox>
          <Triangle w={22} h={7} color="#777" up />
          <IndexValue>3821.68</IndexValue>
          <IndexChange><span>上证</span>-0.34%</IndexChange>
        </IndexBox>
        <Action>
          <svg width="66" height="60" viewBox="343 2142 66 60" fill="none" stroke="#666" strokeWidth="2.700">
            <path d="M360 2150A28 28 0 0 1 401 2184L407 2181M401 2185L400 2177M343.500 2162L351 2159L350 2166M351.500 2159A28 28 0 0 0 393.500 2193" />
            <path d="M366 2159L375.500 2169L385 2159M365 2170H386M365 2178.500H386M375.500 2169V2187" />
          </svg>
          交易
        </Action>
        <Action>
          <svg width="58" height="60" viewBox="548 2142 58 60" fill="none" stroke="#666" strokeWidth="2.700">
            <path d="M588 2146.300H559Q551.500 2146.300 551.500 2154V2190Q551.500 2197.500 559 2197.500H595Q602.500 2197.500 602.500 2190V2161" />
            <path d="M568 2181L571 2172L591 2152L596 2157L576 2177ZM593.500 2150L598 2145.500Q600 2144.500 602 2146Q604.500 2148.500 602.500 2151L598.500 2155Z" fill="#666" stroke="none" />
          </svg>
          发帖
        </Action>
        <Action>
          <svg width="58" height="60" viewBox="750 2142 58 60" fill="none" stroke="#666" strokeWidth="2.700">
            <rect x="753.700" y="2147.700" width="22" height="22" rx="3.500" />
            <rect x="753.700" y="2175" width="22" height="22" rx="3.500" />
            <rect x="781" y="2175" width="22" height="22" rx="3.500" />
            <rect x="782" y="2149" width="19" height="19" rx="3" transform="rotate(45 791.500 2158.500)" />
          </svg>
          功能
        </Action>
        <Action>
          <svg width="60" height="60" viewBox="0 0 60 60" fill="none" stroke="#666" strokeWidth="2.700">
            <circle cx="30" cy="30" r="26.700" />
            {[18, 30, 42].map((x) => <circle key={x} cx={x} cy="30" r="3.200" fill="#666" stroke="none" />)}
          </svg>
          设自选
        </Action>
      </BottomBar>

      <SystemNav>
        <svg width="40" height="40" viewBox="0 0 40 40" stroke="#999" strokeWidth="2.700"><path d="M2 4H38M2 20.500H38M2 36.500H38" /></svg>
        <svg width="40" height="40" viewBox="0 0 40 40" fill="none" stroke="#999" strokeWidth="2.500"><rect x="3" y="3.500" width="33.500" height="33.500" rx="7" /></svg>
        <svg width="40" height="40" viewBox="0 0 40 40" fill="none" stroke="#999" strokeWidth="2.500" strokeLinejoin="round"><path d="M34 3Q36 3 36 5V35Q36 38 33 36.500L5 22Q2 20 5 18Z" /></svg>
      </SystemNav>
    </Screen>
  );
}
